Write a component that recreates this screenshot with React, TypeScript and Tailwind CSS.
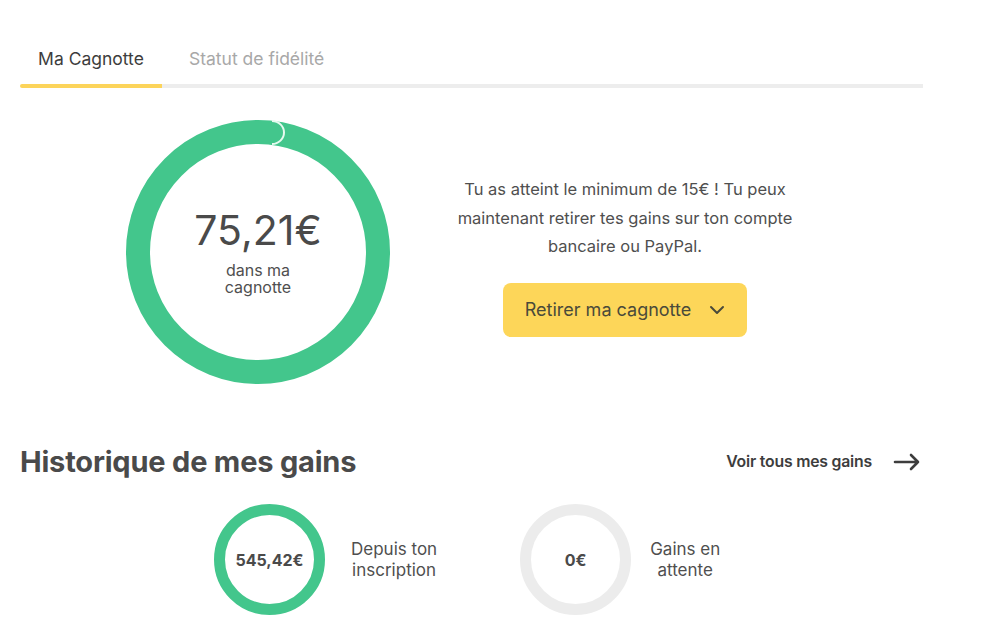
import React from "react";

function Donut({ size, stroke, color, children }: { size: number; stroke: number; color: string; children?: React.ReactNode }) {
  const r = (size - stroke) / 2;
  return (
    <div className="relative shrink-0" style={{ width: size, height: size }}>
      <svg width={size} height={size} className="absolute inset-0">
        <circle cx={size / 2} cy={size / 2} r={r} fill="none" stroke={color} strokeWidth={stroke} />
      </svg>
      <div className="absolute inset-0 flex flex-col items-center justify-center">{children}</div>
    </div>
  );
}

export default function App() {
  return (
    <div className="w-[1000px] h-[641px] bg-white overflow-hidden text-[#4a4a4a]" style={{ fontFamily: "Inter, 'Noto Sans', sans-serif" }}>
      <div className="w-[903px] ml-[20px] pt-[44px]">
        {/* Tabs */}
        <div className="flex">
          <div className="w-[142px] flex flex-col items-center">
            <span className="text-[17.5px] leading-[28px] text-[#3d3d3d] pt-[1px]">Ma Cagnotte</span>
            <div className="mt-[11px] h-[4px] w-full rounded-l-full bg-[#fcd45a]" />
          </div>
          <div className="flex-1 flex flex-col">
            <span className="text-[17.5px] leading-[28px] text-[#a8a8a8] pl-[27px] pt-[1px]">Statut de fidélité</span>
            <div className="mt-[11px] h-[4px] w-full bg-[#ededed]" />
          </div>
        </div>

        {/* Cagnotte */}
        <div className="flex items-start mt-[32px]">
          <div className="ml-[106px] relative">
            <div className="relative w-[264px] h-[264px]">
              <svg width={264} height={264} className="absolute inset-0">
                <circle cx={132} cy={132} r={120} fill="none" stroke="#43c68c" strokeWidth={24} />
                <path d="M 146 1 A 12 11.5 0 0 1 146 24" fill="none" stroke="#e6faef" strokeWidth={2} />
              </svg>
              <div className="absolute inset-0 flex flex-col items-center justify-center">
                <span className="text-[41px] leading-[46px] text-[#4a4a4a] font-normal mt-[-2px]">75,21€</span>
                <span className="text-[16px] leading-[16.5px] text-[#4f4f4f] text-center mt-[9px]">dans ma<br />cagnotte</span>
              </div>
            </div>
          </div>
          <div className="ml-[50px] w-[370px] flex flex-col items-center pt-[55px]">
            <p className="text-[16.5px] leading-[28.5px] text-center text-[#4f4f4f]">
              Tu as atteint le minimum de 15€ ! Tu peux maintenant retirer tes gains sur ton compte bancaire ou PayPal.
            </p>
            <button className="mt-[22px] w-[244px] h-[54px] rounded-[8px] bg-[#fdd659] flex items-center justify-center gap-[18px] text-[18px] text-[#4a4a3a]">
              <span>Retirer ma cagnotte</span>
              <svg width="16" height="10" viewBox="0 0 16 10" fill="none" stroke="#4a4a3a" strokeWidth="2" strokeLinecap="round" strokeLinejoin="round">
                <path d="M2 2l6 6 6-6" />
              </svg>
            </button>
          </div>
        </div>

        {/* Historique */}
        <div className="flex items-center justify-between mt-[60px]">
          <h2 className="text-[29px] leading-[36px] font-bold text-[#4a4a4a] tracking-[-0.2px]">Historique de mes gains</h2>
          <div className="flex items-center gap-[21px] pr-[2px]">
            <span className="text-[15.8px] font-semibold text-[#3d3d3d] tracking-[-0.2px]">Voir tous mes gains</span>
            <svg width="28" height="18" viewBox="0 0 28 18" fill="none" stroke="#3d3d3d" strokeWidth="2.6" strokeLinecap="round" strokeLinejoin="round">
              <path d="M2 9h23M18 2l7 7-7 7" />
            </svg>
          </div>
        </div>

        <div className="flex items-center mt-[24px] ml-[194px]">
          <Donut size={111} stroke={11} color="#43c68c">
            <span className="text-[16px] font-bold text-[#4a4a4a]">545,42€</span>
          </Donut>
          <span className="ml-[26px] text-[17px] leading-[21px] text-[#4f4f4f] text-center">Depuis ton<br />inscription</span>
          <div className="ml-[83px]">
            <Donut size={111} stroke={11} color="#ececec">
              <span className="text-[16px] font-bold text-[#4a4a4a]">0€</span>
            </Donut>
          </div>
          <span className="ml-[19px] text-[17px] leading-[21px] text-[#4f4f4f] text-center">Gains en<br />attente</span>
        </div>
      </div>
    </div>
  );
}
